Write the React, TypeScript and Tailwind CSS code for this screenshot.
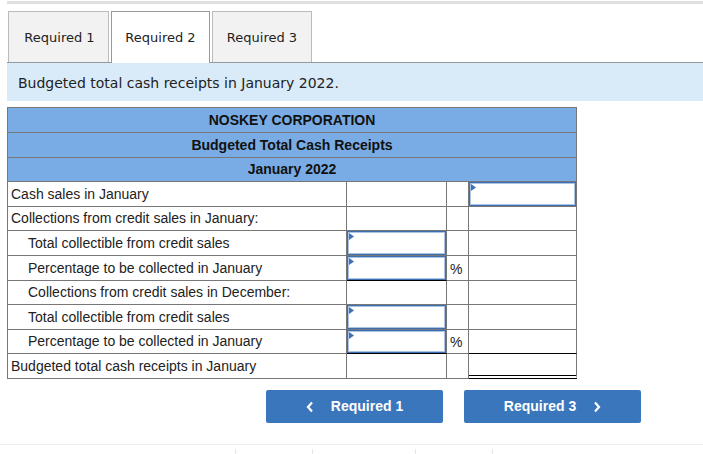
import React from 'react';

const verdana = { fontFamily: '"DejaVu Sans", Verdana, sans-serif' };
const arial = { fontFamily: '"Liberation Sans", Arial, sans-serif' };

type Row = {
  label: string;
  indent?: boolean;
  h: string;
  input?: boolean;
  inputLine?: boolean;
  pct?: boolean;
  total?: boolean;
  totalLine?: 'single' | 'double';
};

const rows: Row[] = [
  { label: 'Cash sales in January', h: 'h-[25px]', total: true },
  { label: 'Collections from credit sales in January:', h: 'h-[24px]' },
  { label: 'Total collectible from credit sales', indent: true, h: 'h-[25px]', input: true },
  { label: 'Percentage to be collected in January', indent: true, h: 'h-[25px]', input: true, inputLine: true, pct: true },
  { label: 'Collections from credit sales in December:', indent: true, h: 'h-[24px]' },
  { label: 'Total collectible from credit sales', indent: true, h: 'h-[25px]', input: true },
  { label: 'Percentage to be collected in January', indent: true, h: 'h-[24px]', input: true, inputLine: true, pct: true, totalLine: 'single' },
  { label: 'Budgeted total cash receipts in January', h: 'h-[25px]', totalLine: 'double' },
];

function InputBox() {
  return (
    <div className="relative w-full h-full border border-[#3d70b2] shadow-[inset_0_0_0_1px_#a9c4e6] bg-white">
      <svg className="absolute left-[1px] top-[1px]" width="5" height="7" viewBox="0 0 5 7">
        <path d="M0 0 L5 3.5 L0 7 Z" fill="#3b73b9" />
      </svg>
    </div>
  );
}

export default function App() {
  return (
    <div className="w-[703px] h-[454px] bg-white overflow-hidden relative" style={verdana}>
      <div className="pl-[7px] pt-[1px]">
        <div className="h-[3px] bg-[#e0e0e0]" />

        {/* Tabs */}
        <div className="mt-[7px] flex gap-[2px] pl-[1px] border-b border-[#999]">
          <div className="w-[101px] h-[51px] bg-[#f2f2f2] border border-b-0 border-[#bbb] flex items-center justify-center pt-[2px] pl-[2px] text-[13px] text-[#222]">
            Required 1
          </div>
          <div className="w-[99px] h-[52px] -mb-px bg-white border border-b-0 border-[#999] flex items-center justify-center pt-[1px] text-[13px] text-[#222]">
            Required 2
          </div>
          <div className="w-[100px] h-[51px] bg-[#f2f2f2] border border-b-0 border-[#bbb] flex items-center justify-center pt-[2px] text-[13px] text-[#222]">
            Required 3
          </div>
        </div>

        {/* Instruction banner */}
        <div className="h-[38px] bg-[#d9ebf9] flex items-center pl-[11px] pt-[2px] text-[14px] text-[#222]">
          Budgeted total cash receipts in January 2022.
        </div>

        {/* Table */}
        <div className="mt-[6px] w-[570px] border-t border-l border-[#777] text-[14px] text-[#222]" style={arial}>
          {['NOSKEY CORPORATION', 'Budgeted Total Cash Receipts', 'January 2022'].map((t, i) => (
            <div
              key={t}
              className={`${i === 2 ? 'h-[24px]' : 'h-[25px]'} bg-[#79ace4] border-r border-b border-[#777] flex items-center justify-center font-bold text-[#111]`}
            >
              {t}
            </div>
          ))}
          {rows.map((r, i) => (
            <div key={i} className={`grid grid-cols-[339px_100px_22px_108px] ${r.h}`}>
              <div className={`border-r border-b border-[#777] flex items-center ${r.indent ? 'pl-[20px]' : 'pl-[3px]'}`}>
                {r.label}
              </div>
              <div className={`border-r border-b ${r.inputLine ? 'border-b-black' : 'border-b-[#777]'} border-r-[#777]`}>
                {r.input && <InputBox />}
              </div>
              <div className="border-r border-b border-[#777] flex items-center pl-[3px] pt-[2px]">
                {r.pct && '%'}
              </div>
              <div
                className={`border-r border-r-[#777] ${
                  r.totalLine === 'double'
                    ? 'border-b-[4px] border-double border-b-black'
                    : r.totalLine === 'single'
                    ? 'border-b border-b-black'
                    : 'border-b border-b-[#777]'
                }`}
              >
                {r.total && <InputBox />}
              </div>
            </div>
          ))}
        </div>

        {/* Nav buttons */}
        <div className="mt-[11px] flex gap-[21px] pl-[259px]" style={arial}>
          <button className="w-[177px] h-[33px] bg-[#3a76bb] rounded-[2px] flex items-center justify-center gap-[17px] text-white font-bold text-[14px]">
            <svg width="8" height="12" viewBox="0 0 8 12">
              <path d="M6 1.5 L2 6 L6 10.5" stroke="white" strokeWidth="2.2" fill="none" />
            </svg>
            <span>Required 1</span>
          </button>
          <button className="w-[177px] h-[33px] bg-[#3a76bb] rounded-[2px] flex items-center justify-center gap-[17px] text-white font-bold text-[14px]">
            <span>Required 3</span>
            <svg width="8" height="12" viewBox="0 0 8 12">
              <path d="M2 1.5 L6 6 L2 10.5" stroke="white" strokeWidth="2.2" fill="none" />
            </svg>
          </button>
        </div>
      </div>

      {/* Bottom rule */}
      <div className="absolute left-0 right-0 top-[444px] h-px bg-[#eeeeee]" />
      <div className="absolute top-[449px] left-[235px] w-px h-[5px] bg-[#e4e4e4]" />
      <div className="absolute top-[449px] left-[312px] w-px h-[5px] bg-[#e4e4e4]" />
      <div className="absolute top-[449px] left-[415px] w-px h-[5px] bg-[#e4e4e4]" />
      <div className="absolute top-[449px] left-[492px] w-px h-[5px] bg-[#e4e4e4]" />
    </div>
  );
}
